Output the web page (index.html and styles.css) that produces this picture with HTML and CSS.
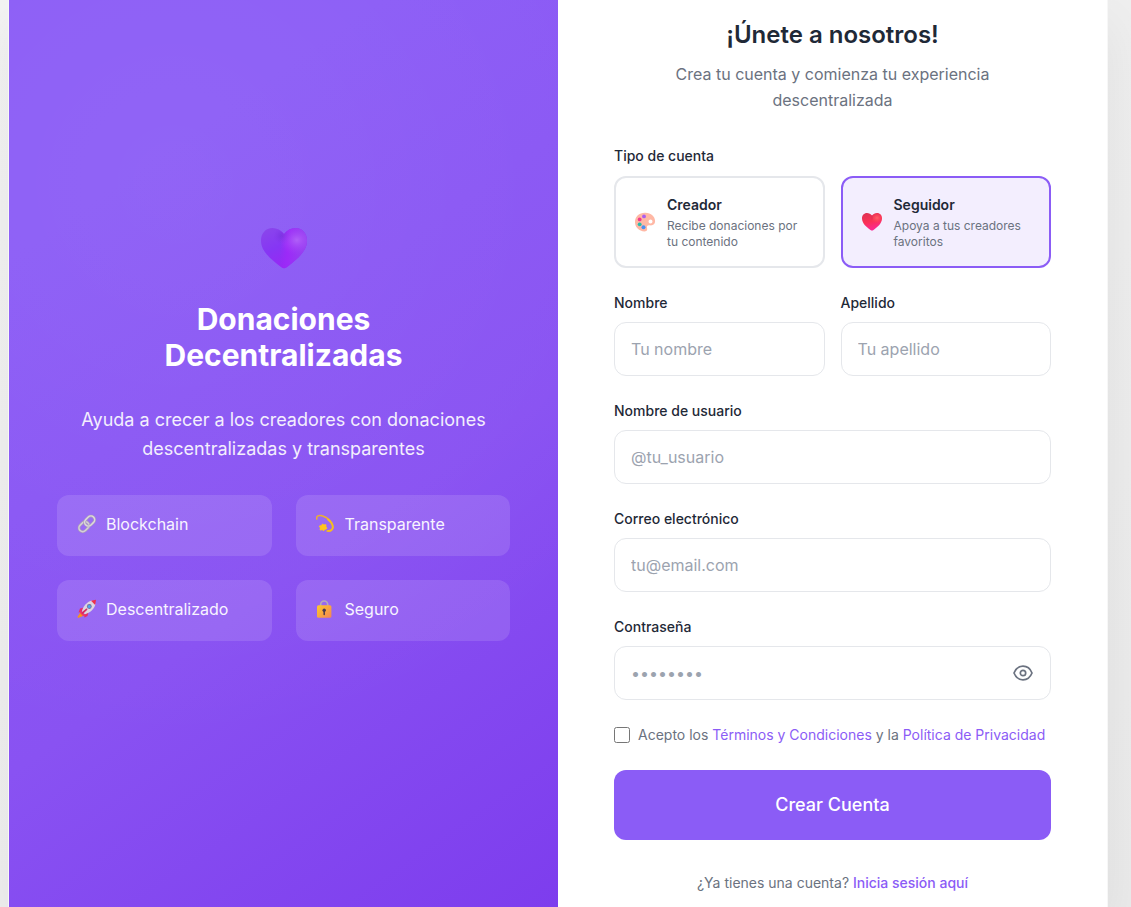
FILE: index.html
```html
<!DOCTYPE html>
<html lang="es">
<head>
<meta charset="utf-8">
<meta name="viewport" content="width=device-width, initial-scale=1">
<title>Crear cuenta</title>
<link rel="stylesheet" href="styles.css">
</head>
<body>
<main class="card">
  <section class="brand">
    <svg class="brand-heart" viewBox="0 0 48 44" aria-hidden="true">
      <defs>
        <linearGradient id="hp" x1="0" y1="0" x2=".6" y2="1"><stop offset="0" stop-color="#8a48ea"/><stop offset=".5" stop-color="#8636f4"/><stop offset="1" stop-color="#9c24f5"/></linearGradient>
        <radialGradient id="hr" cx=".78" cy=".3" r=".38"><stop offset="0" stop-color="#b060f8"/><stop offset="1" stop-color="#a23af8" stop-opacity="0"/></radialGradient>
        <radialGradient id="hs" cx=".47" cy=".2" r=".2"><stop offset="0" stop-color="#6a2fd0" stop-opacity=".55"/><stop offset="1" stop-color="#7a30e0" stop-opacity="0"/></radialGradient>
        <linearGradient id="hb" x1="0" y1="0" x2="1" y2="0"><stop offset=".42" stop-color="#9c2af8" stop-opacity="0"/><stop offset=".58" stop-color="#9c2af8"/><stop offset="1" stop-color="#9345ee"/></linearGradient>
      </defs>
      <path d="M24 7C21 3 17 1 12.500 1 5.500 1 1 6.500 1 13.500c0 12 12 20 20 26.500q3 2.500 6 0C35 33.500 47 25.500 47 13.500 47 6.500 42.500 1 35.500 1 31 1 27 3 24 7Z" fill="url(#hp)"/>
      <path d="M24 7C21 3 17 1 12.500 1 5.500 1 1 6.500 1 13.500c0 12 12 20 20 26.500q3 2.500 6 0C35 33.500 47 25.500 47 13.500 47 6.500 42.500 1 35.500 1 31 1 27 3 24 7Z" fill="url(#hb)"/>
      <path d="M24 7C21 3 17 1 12.500 1 5.500 1 1 6.500 1 13.500c0 12 12 20 20 26.500q3 2.500 6 0C35 33.500 47 25.500 47 13.500 47 6.500 42.500 1 35.500 1 31 1 27 3 24 7Z" fill="url(#hs)"/>
      <path d="M24 7C21 3 17 1 12.500 1 5.500 1 1 6.500 1 13.500c0 12 12 20 20 26.500q3 2.500 6 0C35 33.500 47 25.500 47 13.500 47 6.500 42.500 1 35.500 1 31 1 27 3 24 7Z" fill="url(#hr)"/>
    </svg>
    <h1 class="brand-title">Donaciones<br>Decentralizadas</h1>
    <p class="brand-text">Ayuda a crecer a los creadores con donaciones descentralizadas y transparentes</p>
    <ul class="features">
      <li class="feature">
        <svg class="feature-icon" viewBox="0 0 20 20" aria-hidden="true"><g transform="rotate(-45 10 10)" fill="none" stroke-linecap="round"><rect x="0.500" y="6" width="11" height="7.500" rx="3.700" stroke="#aaa3b3" stroke-width="2.600"/><rect x="0.500" y="6" width="11" height="7.500" rx="3.700" stroke="#d5cdda" stroke-width="1.500"/><rect x="8.500" y="6" width="11" height="7.500" rx="3.700" stroke="#aaa3b3" stroke-width="2.600"/><rect x="8.500" y="6" width="11" height="7.500" rx="3.700" stroke="#dcd5df" stroke-width="1.500"/></g></svg>
        Blockchain
      </li>
      <li class="feature">
        <svg class="feature-icon" viewBox="0 0 20 20" aria-hidden="true"><path d="M.800 5C0 2 3 .800 6 1.800 12 3.400 17 8.500 17 13c0 3-2.500 4.500-6 4" fill="none" stroke="#edb02f" stroke-width="1.500" stroke-linecap="round"/><path d="M12 5.500c3 2.400 4.800 4.800 4.800 7.500 0 2.500-2 4-4.800 3.900" fill="none" stroke="#f3bd24" stroke-width="1.900" stroke-linecap="round"/><path d="m6.500 10 1.400 1 2-.3v2.100l1 1.700-2 .9-1 1.200-1.700-.9-2.200.3.500-2-1.200-1.900 2.200-.4Z" fill="#ffc51b" stroke="#ffc51b" stroke-linejoin="round"/></svg>
        Transparente
      </li>
      <li class="feature">
        <svg class="feature-icon" viewBox="0 0 20 20" aria-hidden="true"><path d="M4 12.500.500 17.800 1 19l5-2 1-2Z" fill="#f6931f"/><path d="M7 8.500 3 9.500 1.500 13.500l3-.5M11.500 13l-1 4-3 1.500-.5-3" fill="#e52d68"/><path d="M3.500 11.500 8.500 16.500 6 17l-3-3Z" fill="#ef356d"/><path d="M5 12.200C6 7 10.500 2.500 15 1.500l3.500 3.600C17.500 10 13 14 8 15.200Z" fill="#ddd5e1"/><path d="M14 1.800 19 .700l-.8 5.200Z" fill="#ee3049"/><circle cx="12.300" cy="7.500" r="2.400" fill="#7a6d99"/><circle cx="12.300" cy="7.500" r="1.600" fill="#4aa7ee"/><path d="m5.500 14 4-3.600" stroke="#d62b60" stroke-width="1.700" stroke-linecap="round"/></svg>
        Descentralizado
      </li>
      <li class="feature">
        <svg class="feature-icon" viewBox="0 0 20 20" aria-hidden="true"><defs><linearGradient id="lk" x2="1" y2="1"><stop stop-color="#ffc928"/><stop offset="1" stop-color="#f28458"/></linearGradient></defs><path d="M4.700 8V5.500a3.500 3.500 0 0 1 7 0V8" fill="none" stroke="#b5acb8" stroke-width="1.700"/><rect x="1" y="6.300" width="14.400" height="12.500" rx="1.500" fill="url(#lk)"/><circle cx="8.200" cy="11.200" r="1.700" fill="#4c3950"/><path d="M8.200 11v4.500" stroke="#4c3950" stroke-width="1.500" stroke-linecap="round"/></svg>
        Seguro
      </li>
    </ul>
  </section>

  <section class="signup">
    <h2 class="signup-title">¡Únete a nosotros!</h2>
    <p class="signup-subtitle">Crea tu cuenta y comienza tu experiencia descentralizada</p>
    <form class="form">
      <fieldset class="types">
        <legend class="label">Tipo de cuenta</legend>
        <div class="pair">
          <label class="type">
            <input class="type-radio" type="radio" name="tipo" value="creador">
            <svg class="type-icon" viewBox="0 0 22 22" aria-hidden="true"><path d="M11.500 1.800C5.500 1.500 1 5.500 1 11c0 5.200 4 9.200 9.500 9.400 2.700.1 3-1.700 2.500-3.400-.5-2 .6-3 2.500-2.700 3.300.5 5.600-.8 5.600-4C21 5.300 17 2 11.500 1.800Zm5 6.800a2 2 0 1 1 0 4 2 2 0 0 1 0-4Z" fill="#ffb8a5" fill-rule="evenodd"/><circle cx="10" cy="5.400" r="1.900" fill="#aa5cf0"/><circle cx="5.700" cy="8.400" r="1.900" fill="#f1398d"/><circle cx="5.700" cy="13.300" r="1.900" fill="#25bdae"/><circle cx="9.500" cy="16.300" r="2" fill="#4b91f3"/></svg>
            <span class="type-copy"><strong class="type-name">Creador</strong><span class="type-text">Recibe donaciones por tu contenido</span></span>
          </label>
          <label class="type">
            <input class="type-radio" type="radio" name="tipo" value="seguidor" checked>
            <svg class="type-icon" viewBox="0 0 22 22" aria-hidden="true"><defs><linearGradient id="rh" x1=".2" y1="0" x2=".5" y2="1"><stop stop-color="#df3154"/><stop offset=".5" stop-color="#fa3155"/><stop offset="1" stop-color="#fb2998"/></linearGradient><radialGradient id="rg" cx=".75" cy=".28" r=".32"><stop stop-color="#ff6267"/><stop offset="1" stop-color="#ff4058" stop-opacity="0"/></radialGradient></defs><path d="M11 4.500C9.700 2.900 8 2 6 2 3 2 1 4.300 1 7.500c0 5.200 5 8.700 8.500 11.500q1.500 1.200 3 0C16 16.200 21 12.700 21 7.500 21 4.300 19 2 16 2c-2 0-3.700.9-5 2.500Z" fill="url(#rh)"/><path d="M11 4.500C9.700 2.900 8 2 6 2 3 2 1 4.300 1 7.500c0 5.200 5 8.700 8.500 11.500q1.500 1.200 3 0C16 16.200 21 12.700 21 7.500 21 4.300 19 2 16 2c-2 0-3.700.9-5 2.500Z" fill="url(#rg)"/><path d="M11 4.500v4" stroke="#c92d4b" stroke-opacity=".5"/></svg>
            <span class="type-copy"><strong class="type-name">Seguidor</strong><span class="type-text">Apoya a tus creadores favoritos</span></span>
          </label>
        </div>
      </fieldset>
      <div class="pair">
        <div class="field"><label class="label" for="nombre">Nombre</label><input class="input" id="nombre" type="text" placeholder="Tu nombre"></div>
        <div class="field"><label class="label" for="apellido">Apellido</label><input class="input" id="apellido" type="text" placeholder="Tu apellido"></div>
      </div>
      <div class="field"><label class="label" for="usuario">Nombre de usuario</label><input class="input" id="usuario" type="text" placeholder="@tu_usuario"></div>
      <div class="field"><label class="label" for="correo">Correo electrónico</label><input class="input" id="correo" type="email" placeholder="tu@email.com"></div>
      <div class="field">
        <label class="label" for="clave">Contraseña</label>
        <div class="password">
          <input class="input" id="clave" type="password" placeholder="••••••••">
          <button class="reveal" type="button" aria-label="Mostrar contraseña"><svg class="reveal-icon" viewBox="0 0 20 20" fill="none" stroke="currentColor" stroke-width="1.700" stroke-linejoin="round" aria-hidden="true"><path d="M1 10C2.700 5.700 6 3.200 10 3.200S17.300 5.700 19 10c-1.700 4.300-5 6.800-9 6.800S2.700 14.300 1 10Z"/><circle cx="10" cy="10" r="2.700"/></svg></button>
        </div>
      </div>
      <div class="terms">
        <input class="check" id="acepto" type="checkbox">
        <label for="acepto">Acepto los <a class="link" href="#terminos">Términos y Condiciones</a> y la <a class="link" href="#privacidad">Política de Privacidad</a></label>
      </div>
      <button class="submit" type="submit">Crear Cuenta</button>
    </form>
    <p class="login">¿Ya tienes una cuenta? <a class="link link-strong" href="#entrar">Inicia sesión aquí</a></p>
  </section>
</main>
</body>
</html>
```
FILE: styles.css
```css
* {
  box-sizing: border-box;
  margin: 0;
}

body {
  min-height: 100vh;
  padding: 0 23px 0 8px;
  background: linear-gradient(135deg, #f3f3f3, #eaeaea);
  font-family: Inter, "Liberation Sans", sans-serif;
  font-size: 16px;
  line-height: 26px;
  color: #1f2937;
}

.card {
  display: grid;
  grid-template-columns: 1fr 1fr;
  min-height: 100vh;
  border: solid #f7f7f7;
  border-width: 0 1px;
  background: #fff;
  box-shadow: 0 24px 48px rgba(0, 0, 0, 0.06);
}

.brand {
  display: flex;
  flex-direction: column;
  align-items: center;
  padding: 227px 48px 48px;
  background:
    radial-gradient(circle at 30% 20%, rgba(255, 255, 255, 0.05), transparent 70%),
    linear-gradient(145deg, #8b5cf6 20%, #8952f2 60%, #7c3aed 105%);
  color: #fff;
  text-align: center;
}

.brand-heart {
  width: 48px;
  height: 44px;
  margin-bottom: 30px;
}

.brand-title {
  margin-bottom: 32px;
  font-size: 30px;
  font-weight: 700;
  line-height: 36px;
}

.brand-text {
  margin-bottom: 32px;
  font-size: 18px;
  line-height: 29px;
  opacity: 0.9;
}

.features {
  display: grid;
  grid-template-columns: 1fr 1fr;
  gap: 24px;
  width: 100%;
  padding: 0;
  list-style: none;
}

.feature {
  display: flex;
  align-items: center;
  gap: 9px;
  padding: 16px 20px 19px;
  border-radius: 12px;
  background: rgba(255, 255, 255, 0.12);
  color: #f8f4ff;
}

.feature-icon {
  flex: none;
  width: 20px;
  height: 20px;
}

.signup {
  padding: 16px 56px 8px;
}

.signup-title {
  margin-bottom: 8px;
  font-size: 24px;
  font-weight: 600;
  line-height: 37px;
  text-align: center;
}

.signup-subtitle {
  max-width: 360px;
  margin: 0 auto 32px;
  color: #6b7280;
  text-align: center;
}

.form {
  display: grid;
  gap: 24px;
}

.types {
  min-width: 0;
  padding: 0;
  border: 0;
}

.types .label {
  margin-bottom: 9px;
}

.pair {
  display: grid;
  grid-template-columns: 1fr 1fr;
  gap: 16px;
}

.label {
  display: block;
  margin-bottom: 8px;
  padding: 0;
  font-size: 14px;
  font-weight: 500;
  line-height: 22px;
}

.type {
  display: flex;
  align-items: center;
  gap: 11px;
  padding: 16px 18px;
  border: 2px solid #e5e7eb;
  border-radius: 12px;
  cursor: pointer;
}

.type:has(.type-radio:checked) {
  border-color: #8b5cf6;
  background: #f3eefe;
}

.type-radio {
  position: absolute;
  opacity: 0;
}

.type-icon {
  flex: none;
  width: 22px;
  height: 22px;
}

.type-name,
.type-text {
  display: block;
}

.type-name {
  font-size: 14px;
  font-weight: 600;
  line-height: 22px;
}

.type-text {
  margin-top: 2px;
  font-size: 12px;
  line-height: 16px;
  color: #6b7280;
}

.input {
  display: block;
  width: 100%;
  height: 54px;
  padding: 0 16px;
  border: 1px solid #e5e7eb;
  border-radius: 12px;
  background: #fff;
  font: inherit;
  color: inherit;
}

.input::placeholder {
  color: #9ca3af;
}

.password {
  position: relative;
}

.reveal {
  position: absolute;
  top: 50%;
  right: 12px;
  display: flex;
  padding: 6px;
  border: 0;
  background: none;
  color: #6b7280;
  transform: translateY(-50%);
  cursor: pointer;
}

.reveal-icon {
  width: 20px;
  height: 20px;
}

.terms {
  display: flex;
  align-items: center;
  gap: 8px;
  font-size: 14px;
  line-height: 22px;
  color: #6b7280;
}

.check {
  flex: none;
  width: 16px;
  height: 16px;
}

.link {
  color: #8b5cf6;
  text-decoration: none;
}

.link-strong {
  font-weight: 500;
}

.submit {
  height: 70px;
  border: 0;
  border-radius: 12px;
  background: #8b5cf6;
  font: inherit;
  font-size: 18px;
  font-weight: 500;
  color: #fff;
  cursor: pointer;
}

.login {
  margin-top: 32px;
  font-size: 14px;
  line-height: 22px;
  color: #6b7280;
  text-align: center;
}
```
